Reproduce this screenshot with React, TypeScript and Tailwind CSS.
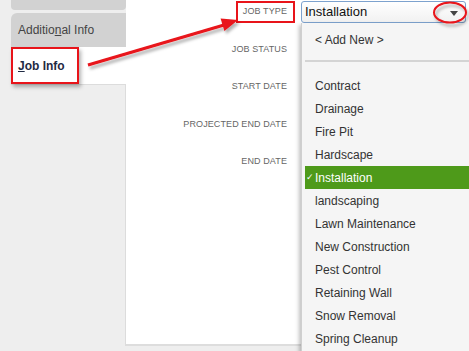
const fields = ['JOB TYPE', 'JOB STATUS', 'START DATE', 'PROJECTED END DATE', 'END DATE']

const options = [
  'Contract',
  'Drainage',
  'Fire Pit',
  'Hardscape',
  'Installation',
  'landscaping',
  'Lawn Maintenance',
  'New Construction',
  'Pest Control',
  'Retaining Wall',
  'Snow Removal',
  'Spring Cleanup',
]

export default function App() {
  const selected = 'Installation'

  return (
    <div className="relative w-[469px] h-[351px] overflow-hidden bg-[#eeeeee] font-['Liberation_Sans',Arial,sans-serif]">
      <div className="flex h-[346px]">
        {/* side tabs */}
        <div className="w-[126px] pl-[11px] flex flex-col">
          <div className="h-[10px] bg-[#d2d2d2] rounded-b-[4px]" />
          <div className="mt-[3px] h-[34px] bg-[#d2d2d2] rounded-tl-[6px] flex items-center pl-[7px] text-[12px] text-[#444]">
            Additio<u>n</u>al Info
          </div>
          <div className="h-[37px] bg-white flex items-center pl-[7px] text-[12px] font-bold text-[#1f2a44]">
            <u>J</u>ob Info
          </div>
          <div className="flex-1 bg-[#eeeeee] border-t border-r border-[#dcdcdc]" />
        </div>

        {/* form panel */}
        <div className="flex-1 bg-white border-b-2 border-[#dddddd]">
          <div className="w-[161px] pt-[2px] flex flex-col gap-[17.5px]">
            {fields.map((f) => (
              <div key={f} className="h-[20px] flex items-center justify-end text-[9px] text-[#666] tracking-[0.1px]">
                {f}
              </div>
            ))}
          </div>
        </div>
      </div>

      {/* select */}
      <div className="absolute left-[301px] top-[1px] w-[165px] h-[22px] border border-[#7da2ce] rounded-[3px] bg-gradient-to-b from-white to-[#f1f1f1] flex items-center pl-[3px] text-[13px] text-[#111]">
        {selected}
        <svg className="absolute right-[7px] top-[9px]" width="8" height="5" viewBox="0 0 8 5">
          <path d="M0 0 H8 L4 5 Z" fill="#444" />
        </svg>
      </div>

      {/* dropdown list */}
      <div className="absolute left-[301px] top-[23px] w-[170px] h-[330px] bg-[#f5f5f5] border-l border-[#cfcfcf] shadow-[-2px_2px_4px_rgba(0,0,0,0.25)] text-[12px] text-[#333]">
        <div className="h-[34px] flex items-center pl-[13px]">&lt; Add New &gt;</div>
        <div className="ml-[3px] h-[2px] bg-[#d4d4d4] mt-[3px]" />
        <div className="mt-[12px] ml-[3px]">
          {options.map((o) =>
            o === selected ? (
              <div key={o} className="h-[23px] flex items-center bg-[#4e9a1a] text-white">
                <span className="w-[10px] text-[9px] pl-[1px]">✓</span>
                {o}
              </div>
            ) : (
              <div key={o} className="h-[23px] flex items-center pl-[10px]">
                {o}
              </div>
            ),
          )}
        </div>
      </div>

      {/* annotations */}
      <div className="absolute left-[11px] top-[47px] w-[68px] h-[37px] border-2 border-[#e8141a] shadow-[2px_3px_4px_rgba(0,0,0,0.3)]" />
      <div className="absolute left-[236px] top-[1px] w-[59px] h-[22px] border-2 border-[#e8141a]" />
      <svg className="absolute left-0 top-0 pointer-events-none" width="469" height="351">
        <defs>
          <filter id="sh" x="-20%" y="-20%" width="140%" height="160%">
            <feDropShadow dx="2" dy="3" stdDeviation="1.5" floodColor="#000" floodOpacity="0.3" />
          </filter>
        </defs>
        <g filter="url(#sh)">
          <line x1="88" y1="65" x2="224" y2="25" stroke="#e8141a" strokeWidth="3" />
          <path d="M238 20 L224.4 31 L220.6 18.5 Z" fill="#e8141a" />
          <ellipse cx="450" cy="12.5" rx="16" ry="10" fill="none" stroke="#e8141a" strokeWidth="2" />
        </g>
      </svg>
    </div>
  )
}
